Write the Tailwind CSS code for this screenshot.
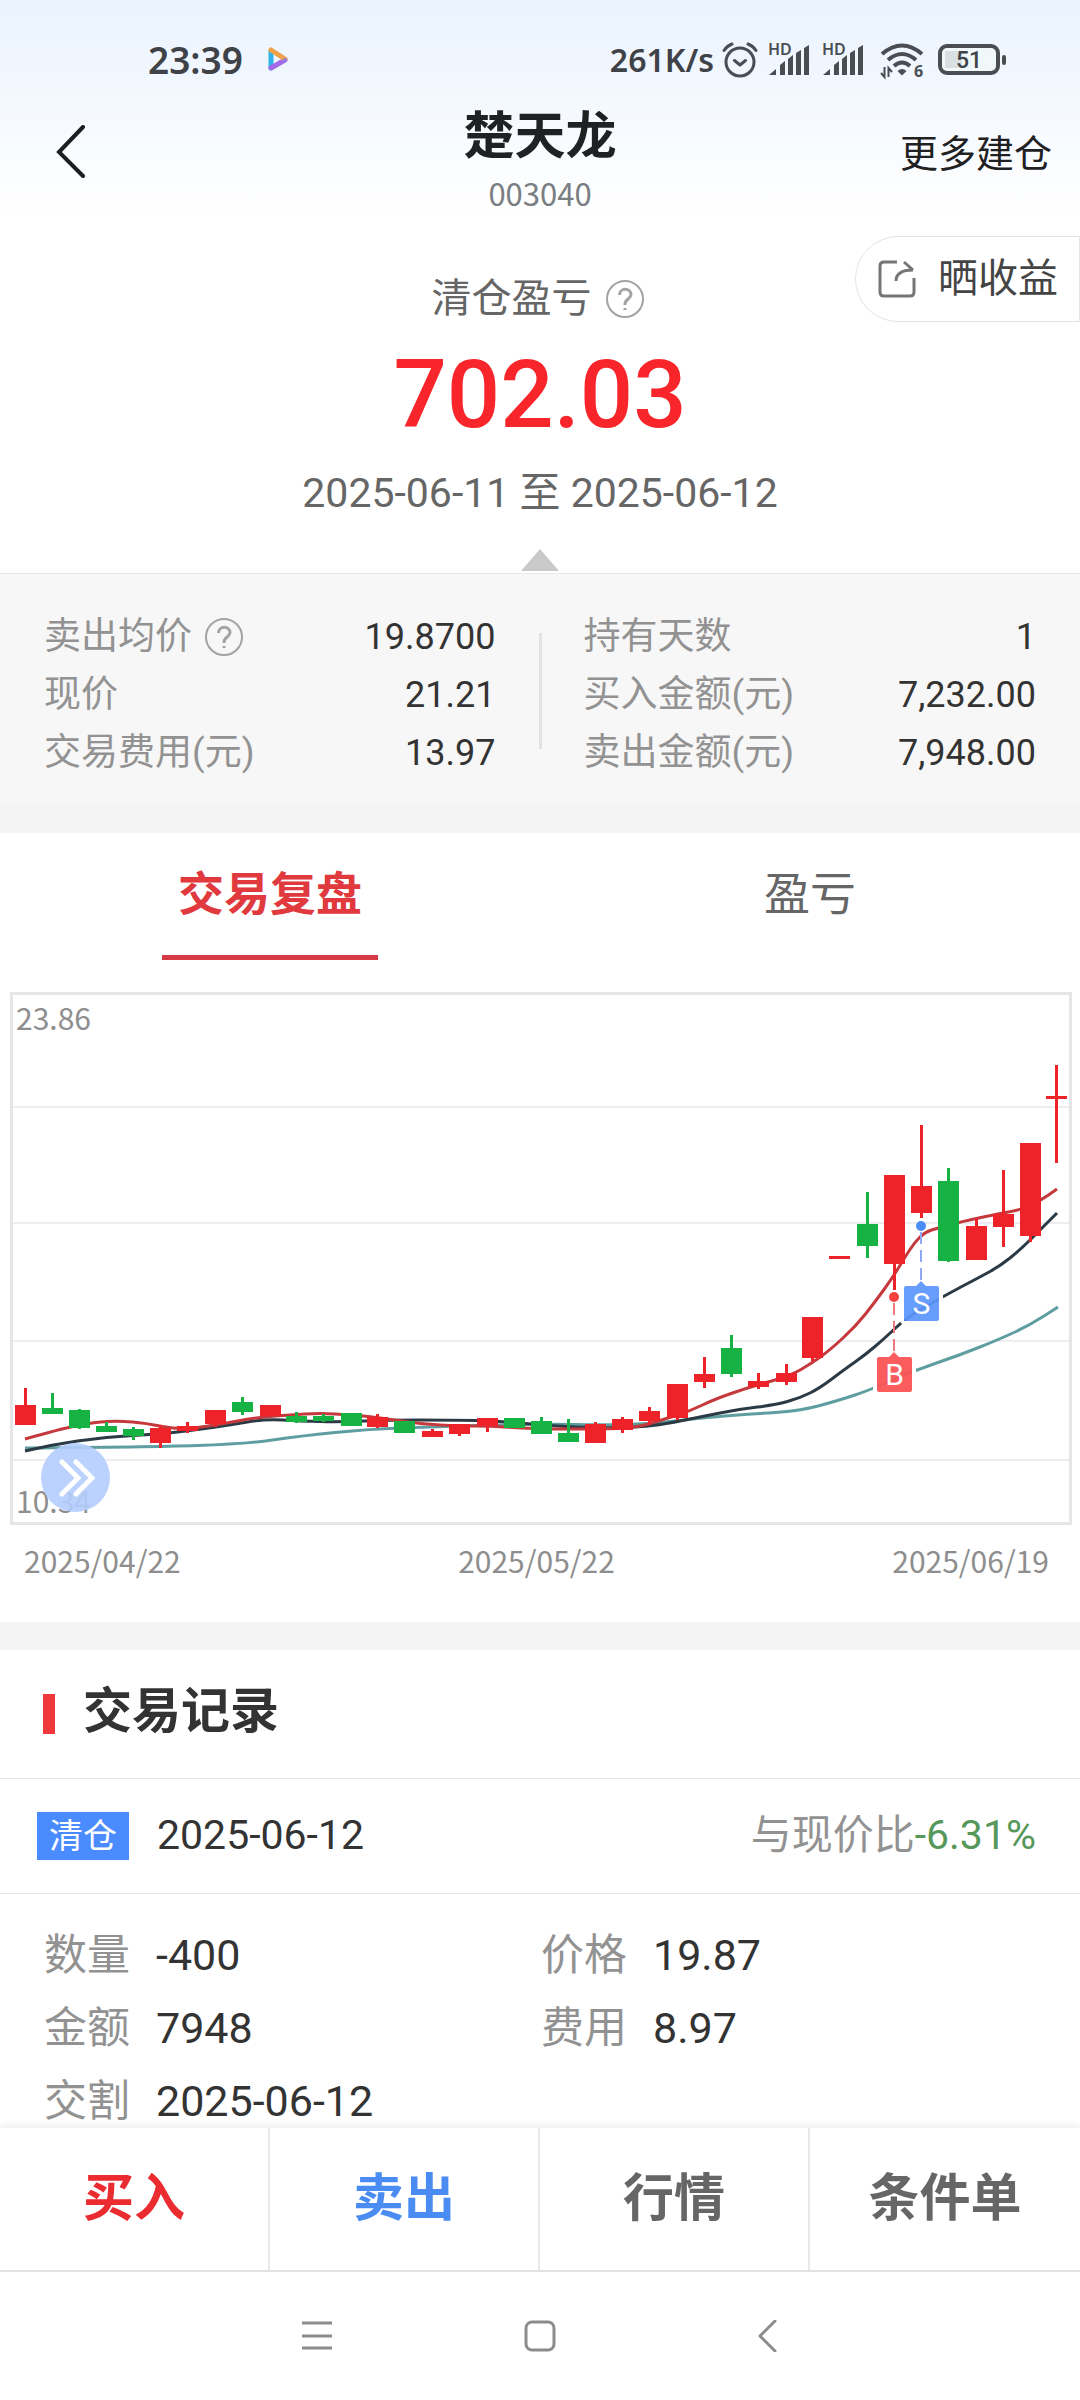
<!DOCTYPE html>
<html lang="zh-CN">
<head>
<meta charset="utf-8">
<meta name="viewport" content="width=device-width, initial-scale=1">
<title>楚天龙 003040</title>
<script src="https://cdn.jsdelivr.net/npm/@tailwindcss/browser@4"></script>
</head>
<body class="bg-white">
<div class="flex min-h-screen flex-col bg-white font-[Roboto,'Noto_Sans_CJK_SC',sans-serif] text-[#333]">

  <div class="bg-linear-to-b from-[#eaf3fe] to-white">
    <!-- Status bar -->
    <div class="flex h-[104px] items-center justify-between pt-4 pr-[74px] pl-[148px] font-['Noto_Sans','Noto_Sans_CJK_SC',sans-serif] text-[#3f4247]">
      <div class="flex items-center gap-6">
        <span class="text-[37px] leading-[40px] font-semibold">23:39</span>
        <svg class="h-7 w-7" viewBox="0 0 28 28" fill="none" stroke-width="5" stroke-linecap="round" aria-hidden="true">
          <path d="M4 5V22" stroke="#2fb3ea"/>
          <path d="M4 22L18 14" stroke="#a46be8"/>
          <path d="M4 4L18 13" stroke="#eda24a"/>
          <circle cx="18" cy="14" r="2" stroke="none" fill="#8d7bea"/>
        </svg>
      </div>
      <div class="flex items-center">
        <span class="text-[32px] leading-[40px] font-semibold">261K/s</span>
        <svg class="ml-2 h-[36px] w-[36px]" viewBox="0 0 36 36" fill="none" stroke="#4a4e53" stroke-width="3" stroke-linecap="round" stroke-linejoin="round" aria-hidden="true">
          <circle cx="18" cy="20" r="14"/><path d="M12.500 18.500L18 23L23.500 18.500M2 8.500Q5 4 10 2M34 8.500Q31 4 26 2"/>
        </svg>
        <svg class="ml-[10px] h-[34px] w-[42px] overflow-visible" viewBox="0 0 42 34" fill="#4a4e53" aria-hidden="true">
          <text x="0" y="12" font-size="16" font-weight="600">HD</text>
          <path d="M1 32L8 26V32ZM12 22L17 18V32H12ZM20 16L25 12V32H20ZM28 10L33 7V32H28ZM36 5L41 2V32H36Z"/>
        </svg>
        <svg class="ml-3 h-[34px] w-[42px] overflow-visible" viewBox="0 0 42 34" fill="#4a4e53" aria-hidden="true">
          <text x="0" y="12" font-size="16" font-weight="600">HD</text>
          <path d="M1 32L8 26V32ZM12 22L17 18V32H12ZM20 16L25 12V32H20ZM28 10L33 7V32H28ZM36 5L41 2V32H36Z"/>
        </svg>
        <svg class="ml-4 h-[36px] w-[44px] overflow-visible" viewBox="0 0 44 36" fill="none" stroke="#4a4e53" stroke-width="4" aria-hidden="true">
          <path d="M2 12Q22 -5 42 12M8 18Q22 6 36 18M14 24Q22 17 30 24"/>
          <path d="M17.500 29Q22 25 26.500 29L22 33.500Z" fill="#4a4e53" stroke="none"/>
          <path d="M4.500 25V35L1 31M8.500 35V26L12 30" stroke-width="2"/>
          <text x="34" y="35" font-size="16" font-weight="700" fill="#4a4e53" stroke="none">6</text>
        </svg>
        <svg class="ml-[14px] h-[32px] w-[68px] overflow-visible" viewBox="0 0 68 32" aria-hidden="true">
          <rect x="2" y="2" width="58" height="27" rx="7" fill="#f1f8fa" stroke="#4a4e53" stroke-width="4"/>
          <path d="M7 7H24V24H7Z" fill="#d9e0e2"/><rect x="64" y="11" width="4" height="10" rx="2" fill="#4a4e53"/>
          <text x="31" y="24" text-anchor="middle" font-family="Roboto" font-size="23" font-weight="500" fill="#3f4247">51</text>
        </svg>
      </div>
    </div>

    <!-- Title bar -->
    <header class="grid grid-cols-[1fr_auto_1fr]">
      <button type="button" aria-label="返回" class="h-24 justify-self-start pr-6 pl-[55px]">
        <svg class="h-[54px] w-[32px]" viewBox="0 0 32 54" fill="none" stroke="#1c1e20" stroke-width="4" stroke-linecap="round" aria-hidden="true"><path d="M28 2L4 27L28 51"/></svg>
      </button>
      <div class="text-center">
        <h1 class="text-[51px] leading-[66px] font-bold text-[#1f2123]">楚天龙</h1>
        <p class="font-['Noto_Sans_CJK_SC',sans-serif] text-[31px] leading-[46px] text-[#7a7e82]">003040</p>
      </div>
      <button type="button" class="h-24 justify-self-end pt-1 pr-7 text-[38px] text-[#1f2123]">更多建仓</button>
    </header>
  </div>

  <main>
    <!-- Realised profit -->
    <section class="text-center">
      <div class="grid grid-cols-[1fr_auto_1fr] pt-5">
        <div class="col-start-2 flex items-center gap-[13px] pt-[39px] pr-1 text-[40px] leading-[48px] text-[#666]">
          <h2>清仓盈亏</h2>
          <button type="button" aria-label="清仓盈亏说明">
            <svg class="h-10 w-10" viewBox="0 0 40 40" fill="none" stroke="#a3a3a3" stroke-width="2" aria-hidden="true"><circle cx="20" cy="20" r="18"/><path d="M14.500 16C14.500 8.500 26 8.500 26 15.500C26 20 20 20 20 25V26" stroke-width="3"/><path d="M18.500 29H21.500V31H18.500Z" fill="#a3a3a3" stroke="none"/></svg>
          </button>
        </div>
        <button type="button" class="flex h-[86px] items-center gap-[22px] justify-self-end rounded-l-full border border-[#e4e4e4] pr-[21px] pl-[22px] text-[40px] text-[#444]">
          <svg class="h-[38px] w-[38px]" viewBox="0 0 38 38" fill="none" stroke="#757575" stroke-width="3" aria-hidden="true"><path d="M19 2H6Q2 2 2 6V32Q2 36 6 36H32Q36 36 36 32V18"/><path d="M18 21C18 13 24 10 35 10M26 2L35 10"/></svg>
          <span>晒收益</span>
        </button>
      </div>
      <p class="pt-4 text-[94px] leading-[112px] font-medium text-[#f8262b]">702.03</p>
      <p class="pt-3 text-[41px] leading-[60px] text-[#666]">2025-06-11 至 2025-06-12</p>
      <svg class="mx-auto mt-[26px] mb-[2px] block h-[22px] w-[38px]" viewBox="0 0 38 22" aria-hidden="true"><path d="M19 0L38 22H0Z" fill="#c9c9c9"/></svg>
    </section>

    <!-- Position details -->
    <section class="grid grid-cols-[1fr_3px_1fr] border-t border-[#e6e6e6] bg-[#f7f7f7] pt-[34px] pb-[23px] text-[37px] leading-[58px]">
      <dl class="pr-[43px] pl-11">
        <div class="flex justify-between">
          <dt class="flex items-center gap-3 text-[#929292]">卖出均价
            <button type="button" aria-label="卖出均价说明">
              <svg class="h-10 w-10" viewBox="0 0 40 40" fill="none" stroke="#a3a3a3" stroke-width="2" aria-hidden="true"><circle cx="20" cy="20" r="18"/><path d="M14.500 16C14.500 8.500 26 8.500 26 15.500C26 20 20 20 20 25V26" stroke-width="3"/><path d="M18.500 29H21.500V31H18.500Z" fill="#a3a3a3" stroke="none"/></svg>
            </button>
          </dt>
          <dd class="text-[36px]">19.8700</dd>
        </div>
        <div class="flex justify-between"><dt class="text-[#929292]">现价</dt><dd class="text-[36px]">21.21</dd></div>
        <div class="flex justify-between"><dt class="text-[#929292]">交易费用(元)</dt><dd class="text-[36px]">13.97</dd></div>
      </dl>
      <div class="mb-2 h-[116px] self-center bg-[#e2e2e2]"></div>
      <dl class="pr-11 pl-[42px]">
        <div class="flex justify-between"><dt class="text-[#929292]">持有天数</dt><dd class="text-[36px]">1</dd></div>
        <div class="flex justify-between"><dt class="text-[#929292]">买入金额(元)</dt><dd class="text-[36px]">7,232.00</dd></div>
        <div class="flex justify-between"><dt class="text-[#929292]">卖出金额(元)</dt><dd class="text-[36px]">7,948.00</dd></div>
      </dl>
    </section>
    <div class="h-[28px] bg-[#f3f3f3]"></div>

    <!-- Tabs -->
    <div role="tablist" class="grid grid-cols-2 text-[46px]">
      <button type="button" role="tab" aria-selected="true" class="flex h-[127px] flex-col items-center font-bold text-[#e0393e]"><span class="flex flex-1 items-center">交易复盘</span><span class="h-[5px] w-2/5 bg-[#d63b45]"></span></button>
      <button type="button" role="tab" aria-selected="false" class="flex h-[127px] flex-col items-center text-[#666]"><span class="flex flex-1 items-center">盈亏</span><span class="h-[5px]"></span></button>
    </div>

    <!-- Candlestick chart -->
    <section class="pt-[30px] pb-[42px]">
      <div class="relative">
        <svg id="chart" class="block w-full font-['Noto_Sans_CJK_SC',sans-serif]" viewBox="0 990 1080 536" role="img" aria-label="日K线">
          <rect x="11.500" y="993.500" width="1059" height="530" fill="#fff" stroke="#e6e6e8" stroke-width="3"/>
          <path d="M13 1107H1069M13 1223H1069M13 1341H1069M13 1460H1069" stroke="#ededf1" stroke-width="2"/>
          <text x="16" y="1030" font-size="30" fill="#8e8e8e">23.86</text>
          <text x="16" y="1513" font-size="30" fill="#8e8e8e">10.34</text>
          <g id="averages" fill="none" stroke-width="3"></g>
          <g id="candles"></g>
          <g>
            <path d="M921 1232V1281" stroke="#8fa9f5" stroke-width="2" stroke-dasharray="12 6"/>
            <circle cx="921" cy="1226" r="5" fill="#4a8ff7"/>
            <rect x="902" y="1284" width="39" height="39" rx="3" fill="none" stroke="#fff" stroke-width="4"/>
            <path d="M906 1286H916L921 1281L926 1286H937Q939 1286 939 1288V1319Q939 1321 937 1321H906Q904 1321 904 1319V1288Q904 1286 906 1286Z" fill="#5b96fc" fill-opacity=".93"/>
            <text x="921.500" y="1314" text-anchor="middle" font-family="Roboto" font-size="30" fill="#fff">S</text>
          </g>
          <g>
            <path d="M894 1303V1353" stroke="#ee7a7e" stroke-width="2" stroke-dasharray="12 6"/>
            <circle cx="894" cy="1297" r="5" fill="#f4423f"/>
            <rect x="875" y="1355" width="39" height="39" rx="3" fill="none" stroke="#fff" stroke-width="4"/>
            <path d="M879 1357H889L894 1352L899 1357H910Q912 1357 912 1359V1390Q912 1392 910 1392H879Q877 1392 877 1390V1359Q877 1357 879 1357Z" fill="#fb5355" fill-opacity=".95"/>
            <text x="894.500" y="1385" text-anchor="middle" font-family="Roboto" font-size="30" fill="#fff">B</text>
          </g>
        </svg>
        <button type="button" aria-label="展开" class="absolute bottom-[14px] left-[41px] flex h-[69px] w-[69px] items-center justify-center rounded-full bg-[#b3cdfd]/90">
          <svg class="h-[38px] w-[38px]" viewBox="0 0 38 38" fill="none" stroke="#fff" stroke-width="5" stroke-linecap="round" aria-hidden="true"><path d="M5 3L21 19L5 35M19 3L35 19L19 35"/></svg>
        </button>
      </div>
      <div class="flex justify-between pt-[14px] pr-[31px] pl-6 font-['Noto_Sans_CJK_SC',sans-serif] text-[30px] leading-[40px] text-[#8e8e8e]">
        <span>2025/04/22</span><span>2025/05/22</span><span>2025/06/19</span>
      </div>
    </section>
    <div class="h-[28px] bg-[#f3f3f3]"></div>

    <!-- Trade records -->
    <section>
      <div class="flex h-[128px] items-center gap-[28px] pl-[43px]">
        <span class="h-10 w-3 bg-[#ef383c]"></span>
        <h2 class="pb-1 text-[49px] leading-[60px] font-bold">交易记录</h2>
      </div>
      <div class="flex h-[116px] items-center justify-between border-y border-[#e6e6e6] pr-11 pl-[37px] text-[41px]">
        <div class="flex items-center gap-7">
          <span class="bg-[#4a8bff] px-3 text-[34px] leading-[48px] text-white">清仓</span>
          <time datetime="2025-06-12">2025-06-12</time>
        </div>
        <p class="text-[#929292]">与现价比<span class="text-[#56975a]">-6.31%</span></p>
      </div>
      <dl class="grid grid-cols-[497px_1fr] gap-y-[21px] pt-[35px] pl-11 text-[43px] leading-[52px]">
        <div class="flex gap-[26px]"><dt class="text-[#929292]">数量</dt><dd>-400</dd></div>
        <div class="flex gap-[26px]"><dt class="text-[#929292]">价格</dt><dd>19.87</dd></div>
        <div class="flex gap-[26px]"><dt class="text-[#929292]">金额</dt><dd>7948</dd></div>
        <div class="flex gap-[26px]"><dt class="text-[#929292]">费用</dt><dd>8.97</dd></div>
        <div class="flex gap-[26px]"><dt class="text-[#929292]">交割</dt><dd>2025-06-12</dd></div>
      </dl>
    </section>
  </main>

  <!-- Actions and system navigation -->
  <footer class="sticky bottom-0 mt-auto bg-white shadow-[0_-2px_8px_rgba(0,0,0,0.08)]">
    <div class="grid grid-cols-4 divide-x-2 divide-[#e8e8e8] border-b-2 border-[#e2e2e2] text-[51px] font-bold text-[#666]">
      <button type="button" class="h-[142px] text-[#ea2b2f]">买入</button>
      <button type="button" class="h-[142px] text-[#4b8cf3]">卖出</button>
      <button type="button" class="h-[142px]">行情</button>
      <button type="button" class="h-[142px]">条件单</button>
    </div>
    <nav class="flex h-32 items-center justify-center gap-48" aria-label="系统导航">
      <button type="button" aria-label="最近任务"><svg class="h-8 w-8" viewBox="0 0 32 32" stroke="#8c8c8c" stroke-width="3" aria-hidden="true"><path d="M2 3H32M2 16H32M2 28H32"/></svg></button>
      <button type="button" aria-label="主页"><svg class="h-8 w-8" viewBox="0 0 32 32" fill="none" stroke="#8c8c8c" stroke-width="3" aria-hidden="true"><rect x="2" y="2" width="28" height="28" rx="6"/></svg></button>
      <button type="button" aria-label="返回上一页"><svg class="h-8 w-8" viewBox="0 0 32 32" fill="none" stroke="#8c8c8c" stroke-width="3" stroke-linecap="round" stroke-linejoin="round" aria-hidden="true"><path d="M27 1L12 16L27 31"/></svg></button>
    </nav>
  </footer>
</div>

<script>
  // Each candle: centre x, wick top, wick bottom, body top, body bottom, direction (1 up, 0 down)
  const candles = [
    [25,1388,1425,1405,1425,1],[52,1393,1414,1408,1414,0],[79,1409,1429,1410,1428,0],[106,1422,1432,1426,1432,0],
    [133,1427,1440,1429,1436,0],[160,1425,1448,1428,1443,1],[187,1422,1433,1426,1431,1],[215,1410,1427,1410,1424,1],
    [242,1397,1415,1402,1412,0],[270,1405,1416,1405,1416,1],[296,1412,1423,1416,1422,0],[323,1414,1422,1416,1421,0],
    [351,1413,1426,1413,1426,0],[377,1414,1428,1417,1427,1],[404,1421,1433,1421,1433,0],[432,1429,1437,1431,1437,1],
    [459,1424,1436,1424,1434,1],[487,1418,1432,1418,1426,1],[514,1418,1428,1418,1428,0],[541,1417,1434,1421,1434,0],
    [568,1419,1442,1433,1442,0],[595,1422,1443,1424,1443,1],[622,1417,1433,1419,1430,1],[649,1407,1425,1411,1421,1],
    [677,1384,1420,1384,1418,1],[704,1357,1388,1374,1382,1],[731,1335,1377,1348,1374,0],[758,1373,1389,1381,1387,1],
    [786,1364,1385,1373,1382,1],[812,1317,1361,1317,1358,1],[839,1256,1258,1256,1259,1],[867,1192,1258,1224,1246,0],
    [894,1175,1290,1175,1264,1],[921,1125,1218,1186,1213,1],[948,1168,1262,1181,1261,0],[976,1219,1260,1226,1260,1],
    [1003,1170,1247,1214,1227,1],[1030,1143,1242,1143,1236,1],[1056,1065,1163,1096,1099,1]
  ];
  document.getElementById('candles').innerHTML = candles.map(([x, hi, lo, top, bottom, up]) => {
    const colour = up ? '#ee2329' : '#16b243';
    return `<g fill="${colour}"><rect x="${x - 1}" y="${hi}" width="3" height="${lo - hi}"/><rect x="${x - 10}" y="${top}" width="21" height="${bottom - top}"/></g>`;
  }).join('');

  const averages = [
    ['#5f9ea0', [[25,1448],[150,1447],[245,1444],[300,1436],[370,1429],[430,1427],[490,1425],[550,1424],[600,1425],[650,1424],[700,1418],[750,1414],[800,1411],[840,1400],[870,1390],[913,1371],[960,1355],[1000,1339],[1030,1325],[1058,1307]]],
    ['#2b3a45', [[25,1451],[50,1445],[105,1437],[160,1434],[195,1430],[230,1425],[265,1419],[300,1421],[340,1422],[390,1420],[450,1420],[500,1421],[550,1426],[600,1428],[640,1427],[665,1424],[700,1417],[740,1409],[775,1405],[800,1398],[820,1388],[845,1369],[865,1355],[885,1338],[905,1319],[940,1298],[980,1277],[1000,1266],[1020,1250],[1040,1230],[1057,1213]]],
    ['#c5393c', [[25,1439],[60,1429],[95,1422],[120,1421],[145,1423],[180,1430],[215,1425],[260,1417],[290,1415],[320,1413],[350,1415],[376,1417],[420,1424],[460,1426],[490,1426],[520,1428],[550,1429],[600,1429],[635,1428],[665,1419],[690,1411],[715,1399],[750,1387],[790,1376],[812,1363],[830,1350],[856,1326],[875,1302],[893,1277],[905,1257],[915,1242],[925,1232],[938,1228],[960,1222],[1002,1213],[1020,1210],[1040,1201],[1057,1189]]]
  ];
  // Smooth each average with quadratic segments through the midpoints
  const smooth = points => {
    let d = `M${points[0]}`;
    for (let i = 1; i < points.length - 1; i++) {
      const [x, y] = points[i], [nx, ny] = points[i + 1];
      d += `Q${x} ${y} ${(x + nx) / 2} ${(y + ny) / 2}`;
    }
    return d + `L${points[points.length - 1]}`;
  };
  document.getElementById('averages').innerHTML = averages.map(([c, p]) => `<path d="${smooth(p)}" stroke="${c}"/>`).join('');
</script>
</body>
</html>
